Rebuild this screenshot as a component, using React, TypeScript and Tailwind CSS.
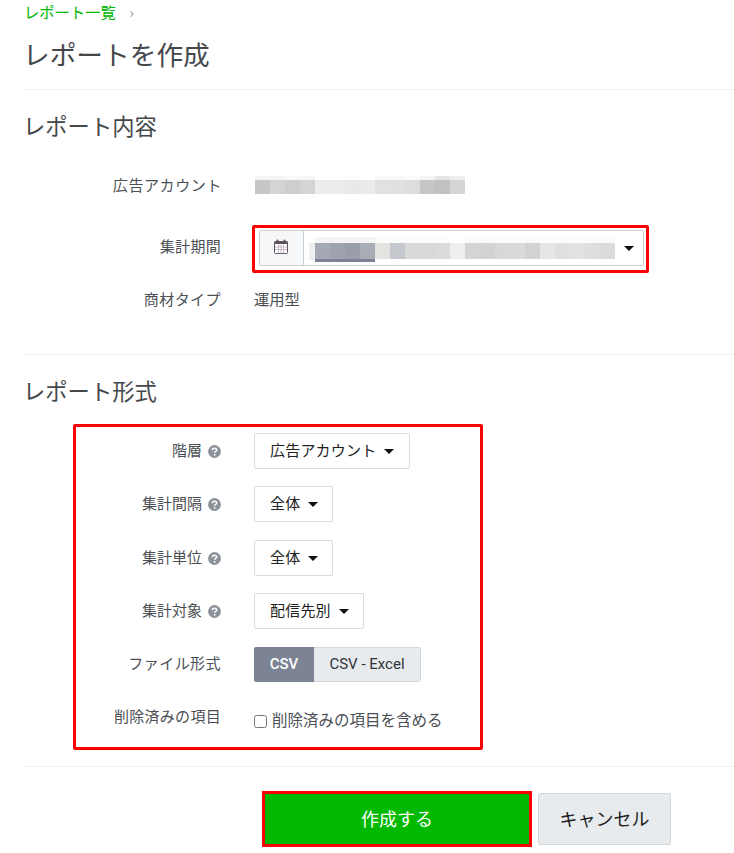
import React from "react";

const font = { fontFamily: '"Roboto","Noto Sans CJK JP",sans-serif' };

function Pixels({ cols, h }: { cols: string[]; h: string }) {
  return (
    <div className="flex">
      {cols.map((c, i) => (
        <div key={i} className={`w-[15px] ${h}`} style={{ backgroundColor: c }} />
      ))}
    </div>
  );
}

function Help() {
  return (
    <svg width="13" height="13" viewBox="0 0 13 13" className="ml-[6px] shrink-0">
      <circle cx="6.5" cy="6.5" r="6.4" fill="#8b9198" />
      <path d="M4.3 5.2c0-1.3 1-2 2.2-2s2.2.7 2.2 1.8c0 1.5-2 1.4-2 2.8" fill="none" stroke="#fff" strokeWidth="1.6" />
      <rect x="5.8" y="9" width="1.7" height="1.6" fill="#fff" />
    </svg>
  );
}

function Caret({ className = "" }: { className?: string }) {
  return <span className={`inline-block w-0 h-0 border-x-[5px] border-x-transparent border-t-[5px] border-t-[#111] ${className}`} />;
}

function Dropdown({ label, width }: { label: string; width: string }) {
  return (
    <div className={`${width} h-[36px] border border-[#d9dbdd] rounded-[2px] bg-white flex items-center pl-[15px] text-[15px] text-[#222] whitespace-nowrap`}>
      <span className="tracking-[0.2px]">{label}</span>
      <Caret className="ml-[8px]" />
    </div>
  );
}

function Label({ children, help, className = "" }: { children: React.ReactNode; help?: boolean; className?: string }) {
  return (
    <div className={`flex items-center justify-end text-[15px] text-[#4b4f54] whitespace-nowrap ${className}`}>
      <span>{children}</span>
      {help && <Help />}
    </div>
  );
}

function FormatRow({ label, dd, width, mt }: { label: string; dd: string; width: string; mt: string }) {
  return (
    <div className={`flex items-center h-[36px] ${mt}`}>
      <Label help className="w-[145px]">{label}</Label>
      <div className="ml-[33px]">
        <Dropdown label={dd} width={width} />
      </div>
    </div>
  );
}

export default function App() {
  return (
    <div style={font} className="w-[734px] h-[853px] bg-white overflow-hidden pl-[25px]">
      <div className="h-[26px] flex items-center text-[15.3px] text-[#00b900] whitespace-nowrap -ml-[1px]">
        <span>レポート一覧</span>
        <span className="ml-[14px] text-[#9aa0a6] text-[14px]">›</span>
      </div>
      <h1 className="mt-[10px] h-[40px] leading-[40px] text-[26.7px] font-normal text-[#45484b] -ml-[2px]">レポートを作成</h1>
      <div className="mt-[13px] h-px bg-[#eeeff0]" />
      <h2 className="mt-[21px] h-[32px] leading-[32px] text-[22.3px] font-normal text-[#45484b] -ml-[2px]">レポート内容</h2>

      <div className="mt-[30px] flex items-center h-[24px]">
        <Label className="w-[197px] tracking-[0.6px] pt-[2px]">広告アカウント</Label>
        <div className="ml-[33px]">
          <Pixels h="h-[4px]" cols={["#f4f4f4", "#f5f5f5", "#f8f8f8", "#f6f6f6", "#ffffff", "#ffffff", "#fbfbfb", "#ffffff", "#f9f9f9", "#f9f9f9", "#fbfbfb", "#f5f5f5", "#e6e6e6", "#efefef"]} />
          <Pixels
            h="h-[14px]"
            cols={["#c6c7c6", "#d3d4d3", "#cdcecd", "#d3d4d3", "#ececec", "#ececec", "#e9e9e9", "#ebebeb", "#e0e2e1", "#dfe0df", "#dcdddc", "#c5c6c7", "#c1c1c3", "#d5d5d3"]}
          />
        </div>
      </div>

      <div className="mt-[28px] flex items-start">
        <Label className="w-[196px] h-[44px] tracking-[0.3px]">集計期間</Label>
        <div className="ml-[31px] w-[397px] h-[48px] border-[3px] border-[#ff0000] rounded-[2px] pl-[4px] pr-[2px] pt-[2px] bg-white">
          <div className="h-[36px] flex border border-[#ced1d4] rounded-[2px]">
            <div className="w-[44px] bg-[#f6f7f9] border-r border-[#ced1d4] flex items-center justify-center pr-[2px] pb-[3px]">
              <svg width="14" height="15" viewBox="0 0 14 15">
                <rect x="0.5" y="2.5" width="13" height="12" rx="1" fill="#fff" stroke="#5c5560" />
                <rect x="0.5" y="2.5" width="13" height="2.5" fill="#5c5560" />
                <rect x="2.5" y="0.5" width="2" height="3" rx="1" fill="#5c5560" />
                <rect x="9.5" y="0.5" width="2" height="3" rx="1" fill="#5c5560" />
                <path d="M4.5 5.5v9M7 5.5v9M9.5 5.5v9M1 8h12M1 10.5h12" stroke="#c0aebb" strokeWidth="0.8" />
              </svg>
            </div>
            <div className="flex-1 flex items-center pl-[11px] pr-[9px] justify-between">
              <div className="relative mt-[2px]">
                <Pixels h="h-[6px]" cols={["#f4f4f6", "#f4f4f6", "#f4f4f6", "#f4f4f6", "#fafafa", "#fbfbfb", "#fcfcfc", "#fcfcfc", "#fcfcfc", "#fefefe", "#fafafa", "#fafafa", "#fbfbfb", "#fbfbfb", "#fafafa", "#fdfdfd", "#fcfcfc", "#fcfcfc", "#fbfbfb", "#fbfbfb"]} />
                <Pixels
                  h="h-[16px]"
                  cols={["#a4a9b4", "#9ea3af", "#9a9eaa", "#a9adb6", "#e4e3df", "#c5c9cd", "#d9d9d9", "#d9d9d9", "#dddada", "#eeeeee", "#d4d4d2", "#d2d2d2", "#d8d8d8", "#dadadc", "#d2d2d5", "#e6e6e4", "#e0e0de", "#e2e2e0", "#dedede", "#dadbdd"]}
                />
                <div className="w-[60px] h-[3px] bg-[#7b8293]" />
                <div className="absolute -left-[6px] top-[6px] w-[6px] h-[17px] bg-[#eeeff2]" />
              </div>
              <Caret />
            </div>
          </div>
        </div>
      </div>

      <div className="mt-[15px] flex items-center h-[24px]">
        <Label className="w-[196px] tracking-[0.45px]">商材タイプ</Label>
        <div className="ml-[33px] text-[15.3px] text-[#4b4f54]">運用型</div>
      </div>

      <div className="mt-[42px] h-px bg-[#eeeff0]" />
      <h2 className="mt-[21px] h-[32px] leading-[32px] text-[22.3px] font-normal text-[#45484b] -ml-[2px]">レポート形式</h2>

      <div className="mt-[16px] ml-[48px] w-[410px] h-[326px] border-[3px] border-[#ff0000] rounded-[2px] pt-[6px]">
        <FormatRow label="階層" dd="広告アカウント" width="w-[156px]" mt="mt-0" />
        <FormatRow label="集計間隔" dd="全体" width="w-[79px]" mt="mt-[17px]" />
        <FormatRow label="集計単位" dd="全体" width="w-[79px]" mt="mt-[18px]" />
        <FormatRow label="集計対象" dd="配信先別" width="w-[110px]" mt="mt-[17px]" />

        <div className="mt-[18px] flex items-center h-[35px]">
          <Label className="w-[145px] tracking-[0.45px]">ファイル形式</Label>
          <div className="ml-[33px] flex h-[35px] text-[15px] font-medium rounded-[2px] overflow-hidden">
            <div className="w-[60px] bg-[#7b8394] text-white flex items-center justify-center">CSV</div>
            <div className="w-[107px] bg-[#e8ebee] border border-l-0 border-[#d5d8db] rounded-r-[2px] text-[#2f3338] font-normal flex items-center justify-center">CSV - Excel</div>
          </div>
        </div>

        <div className="mt-[21px] flex items-start">
          <Label className="w-[145px] tracking-[0.3px] mt-[3px]">削除済みの項目</Label>
          <label className="ml-[33px] mt-[7px] flex items-center text-[15.5px] text-[#4b4f54] whitespace-nowrap">
            <span className="w-[13px] h-[13px] border border-[#767676] rounded-[2.5px] bg-white" />
            <span className="ml-[5px]">削除済みの項目を含める</span>
          </label>
        </div>
      </div>

      <div className="mt-[16px] h-px bg-[#eeeff0]" />

      <div className="mt-[24px] ml-[237px] flex items-center">
        <button className="w-[270px] h-[56px] bg-[#00b900] border-[3px] border-[#ff0000] text-white text-[18px]">作成する</button>
        <button className="ml-[6px] w-[133px] h-[52px] bg-[#e8ebee] border border-[#d5d8db] rounded-[2px] text-[#222] text-[18px]">キャンセル</button>
      </div>
    </div>
  );
}
